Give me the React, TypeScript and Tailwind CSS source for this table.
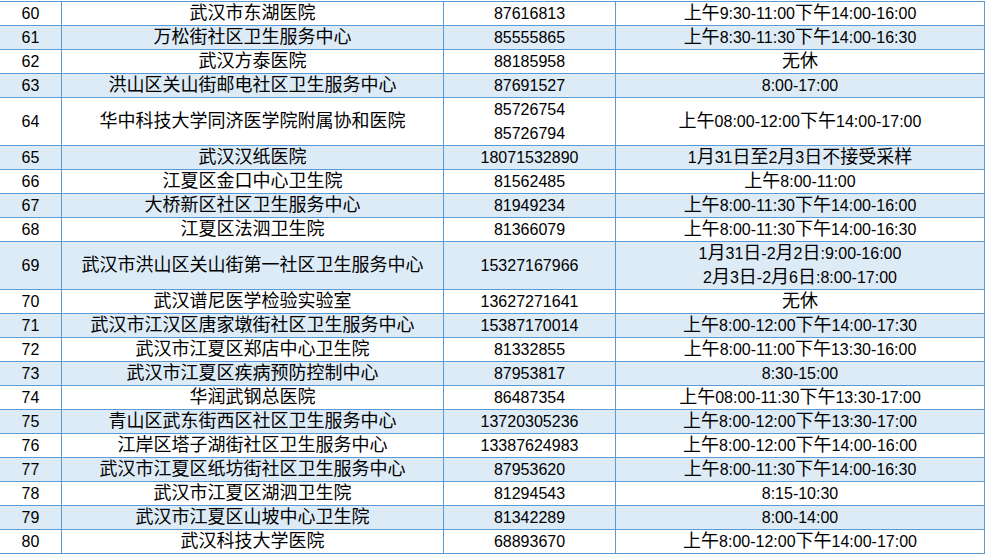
import React from "react";

type Row = { n: string; name: string; phone: string[]; hours: string[]; tall?: boolean };

const rows: Row[] = [
  { n: "60", name: "武汉市东湖医院", phone: ["87616813"], hours: ["上午9:30-11:00下午14:00-16:00"] },
  { n: "61", name: "万松街社区卫生服务中心", phone: ["85555865"], hours: ["上午8:30-11:30下午14:00-16:30"] },
  { n: "62", name: "武汉方泰医院", phone: ["88185958"], hours: ["无休"] },
  { n: "63", name: "洪山区关山街邮电社区卫生服务中心", phone: ["87691527"], hours: ["8:00-17:00"] },
  { n: "64", name: "华中科技大学同济医学院附属协和医院", phone: ["85726754", "85726794"], hours: ["上午08:00-12:00下午14:00-17:00"], tall: true },
  { n: "65", name: "武汉汉纸医院", phone: ["18071532890"], hours: ["1月31日至2月3日不接受采样"] },
  { n: "66", name: "江夏区金口中心卫生院", phone: ["81562485"], hours: ["上午8:00-11:00"] },
  { n: "67", name: "大桥新区社区卫生服务中心", phone: ["81949234"], hours: ["上午8:00-11:30下午14:00-16:00"] },
  { n: "68", name: "江夏区法泗卫生院", phone: ["81366079"], hours: ["上午8:00-11:30下午14:00-16:30"] },
  { n: "69", name: "武汉市洪山区关山街第一社区卫生服务中心", phone: ["15327167966"], hours: ["1月31日-2月2日:9:00-16:00", "2月3日-2月6日:8:00-17:00"], tall: true },
  { n: "70", name: "武汉谱尼医学检验实验室", phone: ["13627271641"], hours: ["无休"] },
  { n: "71", name: "武汉市江汉区唐家墩街社区卫生服务中心", phone: ["15387170014"], hours: ["上午8:00-12:00下午14:00-17:30"] },
  { n: "72", name: "武汉市江夏区郑店中心卫生院", phone: ["81332855"], hours: ["上午8:00-11:00下午13:30-16:00"] },
  { n: "73", name: "武汉市江夏区疾病预防控制中心", phone: ["87953817"], hours: ["8:30-15:00"] },
  { n: "74", name: "华润武钢总医院", phone: ["86487354"], hours: ["上午08:00-11:30下午13:30-17:00"] },
  { n: "75", name: "青山区武东街西区社区卫生服务中心", phone: ["13720305236"], hours: ["上午8:00-12:00下午13:30-17:00"] },
  { n: "76", name: "江岸区塔子湖街社区卫生服务中心", phone: ["13387624983"], hours: ["上午8:00-12:00下午14:00-16:00"] },
  { n: "77", name: "武汉市江夏区纸坊街社区卫生服务中心", phone: ["87953620"], hours: ["上午8:00-11:30下午14:00-16:30"] },
  { n: "78", name: "武汉市江夏区湖泗卫生院", phone: ["81294543"], hours: ["8:15-10:30"] },
  { n: "79", name: "武汉市江夏区山坡中心卫生院", phone: ["81342289"], hours: ["8:00-14:00"] },
  { n: "80", name: "武汉科技大学医院", phone: ["68893670"], hours: ["上午8:00-12:00下午14:00-17:00"] },
];

function Mixed({ text }: { text: string }) {
  const parts = text.match(/[\u3000-\u9fff]+|[^\u3000-\u9fff]+/g) || [];
  return (
    <span className="whitespace-nowrap">
      {parts.map((p, i) =>
        /[\u3000-\u9fff]/.test(p) ? (
          <span key={i} className="text-[18px]">{p}</span>
        ) : (
          <span key={i} className="text-[16px]">{p}</span>
        )
      )}
    </span>
  );
}

function Cell({ lines, w }: { lines: string[]; w: string }) {
  return (
    <div className={`${w} shrink-0 border-r border-[#5b9bd5] flex flex-col items-center justify-center leading-[24px]`}>
      {lines.map((l, i) => (
        <div key={i} className="h-[24px] flex items-center justify-center">
          <Mixed text={l} />
        </div>
      ))}
    </div>
  );
}

export default function App() {
  return (
    <div
      className="w-[985px] h-[555px] bg-white overflow-hidden pt-[1px] text-black"
      style={{ fontFamily: '"Liberation Sans", "Noto Sans CJK SC", sans-serif' }}
    >
      <div className="border-t border-[#5b9bd5]">
        {rows.map((r, idx) => (
          <div
            key={r.n}
            className={`flex border-b border-[#5b9bd5] ${r.tall ? "h-[48px]" : "h-[24px]"} ${
              idx % 2 === 1 ? "bg-[#ddebf7]" : "bg-white"
            }`}
          >
            <Cell lines={[r.n]} w="w-[62px]" />
            <Cell lines={[r.name]} w="w-[382px]" />
            <Cell lines={r.phone} w="w-[172px]" />
            <Cell lines={r.hours} w="w-[369px]" />
          </div>
        ))}
      </div>
    </div>
  );
}
